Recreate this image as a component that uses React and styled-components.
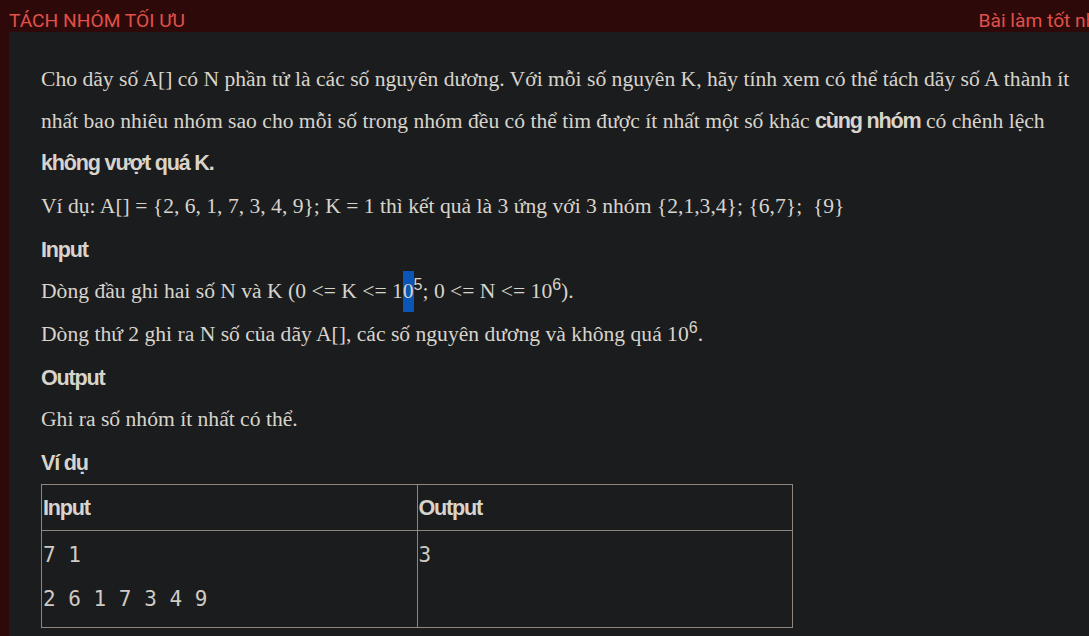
import styled, { createGlobalStyle } from 'styled-components';

const GlobalStyle = createGlobalStyle`
  html, body {
    margin: 0;
    padding: 0;
    background: #2d0909;
    overflow: hidden;
  }
`;

const Page = styled.div`
  width: 1113px;
  min-height: 100vh;
  background: #2d0909;
  display: flex;
  flex-direction: column;
  padding-left: 9px;
  box-sizing: border-box;
`;

const TopBar = styled.div`
  height: 32px;
  display: flex;
  justify-content: space-between;
  align-items: flex-end;
  font-family: Roboto, "Liberation Sans", sans-serif;
  font-size: 19.2px;
  line-height: 1;
  color: #e0514b;
  padding-bottom: 2px;
  box-sizing: border-box;
  white-space: nowrap;
`;

const Panel = styled.div`
  flex: 1;
  background: #1b1c1e;
  padding: 27px 32px 20px;
  color: #d8d4cc;
  font-family: "Liberation Serif", "Times New Roman", serif;
  font-size: 21.6px;
`;

const Para = styled.p`
  margin: 0 0 2px;
  line-height: 41px;
`;

const Strong = styled.b`
  font-family: "Liberation Sans", Arial, sans-serif;
  font-weight: 700;
  letter-spacing: -1.2px;
`;

const Heading = styled.div`
  font-family: "Liberation Sans", Arial, sans-serif;
  font-weight: 700;
  letter-spacing: -1.2px;
  line-height: 41px;
  margin-bottom: 1px;
`;

const Sup = styled.sup`
  font-family: "Liberation Sans", Arial, sans-serif;
  font-size: 16px;
  vertical-align: baseline;
  position: relative;
  top: -8px;
  line-height: 0;
`;

const Selected = styled.span`
  background: #0b55b6;
  display: inline-block;
  line-height: 41px;
`;

const Table = styled.table`
  width: 752px;
  border-collapse: collapse;
  table-layout: fixed;
`;

const Th = styled.th`
  border: 1px solid #8d8780;
  text-align: left;
  height: 45px;
  padding: 0 1px;
  font-family: "Liberation Sans", Arial, sans-serif;
  font-weight: 700;
  letter-spacing: -1.2px;
  font-size: 21.6px;
  color: #d8d4cc;
`;

const Td = styled.td`
  border: 1px solid #8d8780;
  vertical-align: top;
  padding: 2px 1px 6px;
`;

const Pre = styled.pre`
  margin: 0;
  font-family: "DejaVu Sans Mono", "Liberation Mono", monospace;
  font-size: 21px;
  line-height: 44px;
  color: #cfcbc3;
`;

export default function App() {
  return (
    <>
      <GlobalStyle />
      <Page>
        <TopBar>
          <span>TÁCH NHÓM TỐI ƯU</span>
          <span>Bài làm tốt nhất</span>
        </TopBar>
        <Panel>
          <Para>
            Cho dãy số A[] có N phần tử là các số nguyên dương. Với mỗi số nguyên K, hãy tính xem có thể tách dãy số A thành ít
            nhất bao nhiêu nhóm sao cho mỗi số trong nhóm đều có thể tìm được ít nhất một số khác <Strong>cùng nhóm</Strong> có chênh lệch{' '}
            <Strong>không vượt quá K.</Strong>
          </Para>
          <Para>Ví dụ: A[] = {'{'}2, 6, 1, 7, 3, 4, 9{'}'}; K = 1 thì kết quả là 3 ứng với 3 nhóm {'{'}2,1,3,4{'}'}; {'{'}6,7{'}'};&nbsp; {'{'}9{'}'}</Para>
          <Heading>Input</Heading>
          <Para>
            Dòng đầu ghi hai số N và K (0 &lt;= K &lt;= 1<Selected>0</Selected><Sup>5</Sup>; 0 &lt;= N &lt;= 10<Sup>6</Sup>).
          </Para>
          <Para>
            Dòng thứ 2 ghi ra N số của dãy A[], các số nguyên dương và không quá 10<Sup>6</Sup>.
          </Para>
          <Heading>Output</Heading>
          <Para>Ghi ra số nhóm ít nhất có thể.</Para>
          <Heading>Ví dụ</Heading>
          <Table>
            <thead>
              <tr>
                <Th>Input</Th>
                <Th>Output</Th>
              </tr>
            </thead>
            <tbody>
              <tr>
                <Td>
                  <Pre>{'7 1\n2 6 1 7 3 4 9'}</Pre>
                </Td>
                <Td>
                  <Pre>3</Pre>
                </Td>
              </tr>
            </tbody>
          </Table>
        </Panel>
      </Page>
    </>
  );
}
